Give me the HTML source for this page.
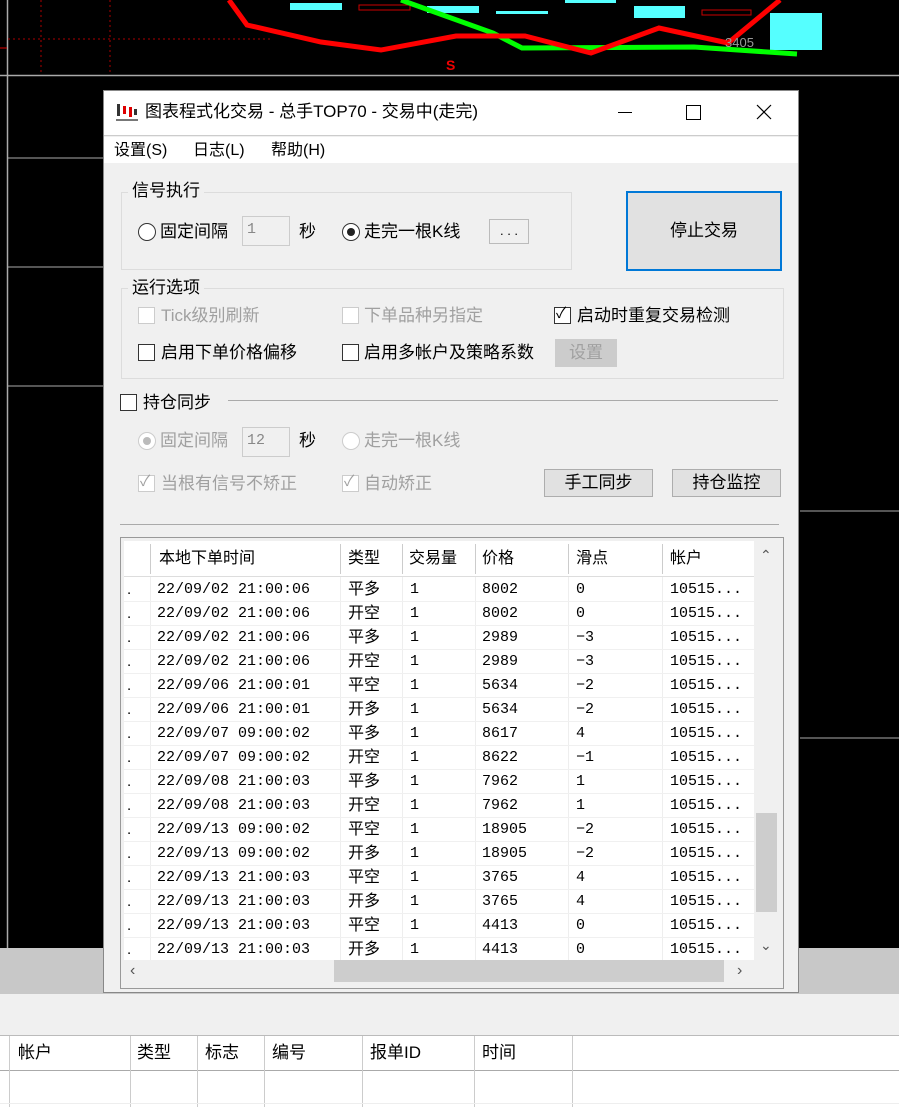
<!DOCTYPE html>
<html><head><meta charset="utf-8"><style>
*{margin:0;padding:0;box-sizing:border-box}
body{width:899px;height:1107px;position:relative;overflow:hidden;background:#fff;font-family:"Liberation Sans","Noto Sans CJK SC",sans-serif;font-size:17px;color:#000}
.a{position:absolute}
.t{position:absolute;white-space:nowrap;line-height:20px}
.g{color:#a0a0a0}
.cb{position:absolute;width:17px;height:17px;border:1px solid #333;background:#fff}
.cb.d{border-color:#ccc}
.rb{position:absolute;width:18px;height:18px;border:1px solid #333;border-radius:50%;background:#fff}
.inp{position:absolute;border:1px solid #ccc;background:#f0f0f0;color:#888;font-family:"Liberation Mono",monospace;font-size:15px;padding-left:4px;line-height:26px}
.btn{position:absolute;border:1px solid #adadad;background:#e1e1e1;text-align:center}
.row{position:absolute;left:0;width:630px;height:24px;border-bottom:1px solid #f0f0f0;font-size:15px;line-height:24px}
.row span{position:absolute;white-space:nowrap}
.m{font-family:"Liberation Mono","Noto Sans CJK SC",monospace;font-size:15px}
</style></head><body>
<!-- chart area -->
<div class="a" style="left:0;top:0;width:899px;height:948px;background:#000"></div>
<svg class="a" style="left:0;top:0" width="899" height="948">
<line x1="7.5" y1="0" x2="7.5" y2="948" stroke="#aaa" stroke-width="1.5"/>
<line x1="0" y1="75.5" x2="899" y2="75.5" stroke="#aaa" stroke-width="1.5"/>
<line x1="8" y1="39" x2="270" y2="39" stroke="#a00" stroke-dasharray="2,3"/>
<line x1="41" y1="0" x2="41" y2="72" stroke="#a00" stroke-dasharray="2,3"/>
<line x1="110" y1="0" x2="110" y2="72" stroke="#a00" stroke-dasharray="2,3"/>
<line x1="0" y1="48" x2="7" y2="48" stroke="#d00"/>
<line x1="800" y1="511" x2="899" y2="511" stroke="#aaa"/>
<line x1="800" y1="738" x2="899" y2="738" stroke="#aaa"/>
<line x1="8" y1="158" x2="103" y2="158" stroke="#aaa"/>
<line x1="8" y1="267" x2="103" y2="267" stroke="#aaa"/>
<line x1="8" y1="386" x2="103" y2="386" stroke="#aaa"/>
<rect x="290" y="3" width="52" height="7" fill="#5ff"/>
<rect x="427" y="6" width="52" height="7" fill="#5ff"/>
<rect x="496" y="11" width="52" height="3" fill="#5ff"/>
<rect x="565" y="0" width="51" height="3" fill="#5ff"/>
<rect x="634" y="6" width="51" height="12" fill="#5ff"/>
<rect x="770" y="13" width="52" height="37" fill="#5ff"/>
<rect x="359" y="5" width="51" height="5" fill="none" stroke="#c00"/>
<rect x="702" y="10" width="49" height="5" fill="none" stroke="#c00"/>
<polyline points="401,0 493,33 522,48 694,47 797,54" fill="none" stroke="#0f0" stroke-width="5"/>
<polyline points="229,0 247,25 321,42 381,50 456,36 525,36 591,53 659,28 728,43 780,0" fill="none" stroke="#f00" stroke-width="5"/>
<text x="725" y="47" fill="#999" font-size="13" font-family="Liberation Sans">3405</text>
<text x="446" y="70" fill="#e00" font-size="14" font-weight="bold" font-family="Liberation Sans">S</text>
</svg>
<!-- bottom panel -->
<div class="a" style="left:0;top:948px;width:899px;height:46px;background:#c8c8c8"></div>
<div class="a" style="left:0;top:994px;width:899px;height:42px;background:#f0f0f0;border-bottom:1px solid #bbb"></div>
<div class="a" style="left:0;top:1036px;width:899px;height:35px;background:#fff;border-bottom:1px solid #aaa"></div>
<div class="a" style="left:9px;top:1036px;width:1px;height:71px;background:#ccc"></div>
<div class="a" style="left:130px;top:1036px;width:1px;height:71px;background:#ccc"></div>
<div class="a" style="left:197px;top:1036px;width:1px;height:71px;background:#ccc"></div>
<div class="a" style="left:264px;top:1036px;width:1px;height:71px;background:#ccc"></div>
<div class="a" style="left:362px;top:1036px;width:1px;height:71px;background:#ccc"></div>
<div class="a" style="left:474px;top:1036px;width:1px;height:71px;background:#ccc"></div>
<div class="a" style="left:572px;top:1036px;width:1px;height:71px;background:#ccc"></div>
<div class="a" style="left:0;top:1103px;width:899px;height:1px;background:#eee"></div>
<div class="t" style="left:18px;top:1043px">帐户</div>
<div class="t" style="left:137px;top:1043px">类型</div>
<div class="t" style="left:205px;top:1043px">标志</div>
<div class="t" style="left:272px;top:1043px">编号</div>
<div class="t" style="left:370px;top:1043px">报单ID</div>
<div class="t" style="left:482px;top:1043px">时间</div>
<!-- dialog -->
<div class="a" style="left:103px;top:90px;width:696px;height:903px;background:#f0f0f0;border:1px solid #888"></div>
<div class="a" style="left:104px;top:91px;width:694px;height:45px;background:#fff;border-bottom:1px solid #ccc"></div>
<div class="a" style="left:104px;top:137px;width:694px;height:26px;background:#fff"></div>
<svg class="a" style="left:115px;top:101px" width="24" height="22"><rect x="2" y="3" width="3" height="12" fill="#333"/><rect x="8" y="5" width="3" height="8" fill="#d00"/><rect x="14" y="6" width="3" height="10" fill="#d00"/><rect x="19" y="8" width="3" height="6" fill="#333"/><rect x="1" y="18" width="22" height="2" fill="#777"/></svg>
<div class="t" style="left:145px;top:102px;font-size:17px">图表程式化交易 - 总手TOP70 - 交易中(走完)</div>
<div class="a" style="left:618px;top:112px;width:14px;height:1px;background:#000"></div>
<div class="a" style="left:686px;top:105px;width:15px;height:15px;border:1px solid #000"></div>
<svg class="a" style="left:756px;top:104px" width="16" height="16"><path d="M1 1L15 15M15 1L1 15" stroke="#000" stroke-width="1.2"/></svg>
<div class="t" style="left:114px;top:141px;font-size:16px">设置(S)</div>
<div class="t" style="left:193px;top:141px;font-size:16px">日志(L)</div>
<div class="t" style="left:271px;top:141px;font-size:16px">帮助(H)</div>
<!-- 信号执行 -->
<div class="a" style="left:121px;top:192px;width:451px;height:78px;border:1px solid #dcdcdc"></div>
<div class="t" style="left:128px;top:181px;background:#f0f0f0;padding:0 4px">信号执行</div>
<div class="rb" style="left:138px;top:223px"></div>
<div class="t" style="left:160px;top:222px">固定间隔</div>
<div class="inp" style="left:242px;top:216px;width:48px;height:30px">1</div>
<div class="t" style="left:299px;top:222px">秒</div>
<div class="rb" style="left:342px;top:223px"></div><div class="a" style="left:347px;top:228px;width:8px;height:8px;border-radius:50%;background:#222"></div>
<div class="t" style="left:364px;top:222px">走完一根K线</div>
<div class="btn" style="left:489px;top:219px;width:40px;height:25px;font-size:13px;line-height:22px;background:#f0f0f0;border-color:#bbb">. . .</div>
<div class="btn" style="left:626px;top:191px;width:156px;height:80px;border:2px solid #0078d7;line-height:76px;font-size:17px">停止交易</div>
<!-- 运行选项 -->
<div class="a" style="left:121px;top:288px;width:663px;height:91px;border:1px solid #dcdcdc"></div>
<div class="t" style="left:128px;top:278px;background:#f0f0f0;padding:0 4px">运行选项</div>
<div class="cb d" style="left:138px;top:307px"></div><div class="t g" style="left:161px;top:306px">Tick级别刷新</div>
<div class="cb d" style="left:342px;top:307px"></div><div class="t g" style="left:364px;top:306px">下单品种另指定</div>
<div class="cb" style="left:554px;top:307px"></div><div class="t" style="left:556px;top:304px;font-size:15px">✓</div><div class="t" style="left:577px;top:306px">启动时重复交易检测</div>
<div class="cb" style="left:138px;top:344px"></div><div class="t" style="left:161px;top:343px">启用下单价格偏移</div>
<div class="cb" style="left:342px;top:344px"></div><div class="t" style="left:364px;top:343px">启用多帐户及策略系数</div>
<div class="btn g" style="left:555px;top:339px;width:62px;height:28px;background:#ccc;border-color:#ccc;line-height:26px">设置</div>
<!-- 持仓同步 -->
<div class="cb" style="left:120px;top:394px"></div><div class="t" style="left:143px;top:393px">持仓同步</div>
<div class="a" style="left:228px;top:400px;width:550px;height:1px;background:#aaa"></div>
<div class="rb" style="left:138px;top:432px;border-color:#ccc"></div><div class="a" style="left:143px;top:437px;width:8px;height:8px;border-radius:50%;background:#bbb"></div>
<div class="t g" style="left:160px;top:431px">固定间隔</div>
<div class="inp" style="left:242px;top:427px;width:48px;height:30px">12</div>
<div class="t" style="left:299px;top:431px">秒</div>
<div class="rb" style="left:342px;top:432px;border-color:#ccc"></div><div class="t g" style="left:364px;top:431px">走完一根K线</div>
<div class="cb d" style="left:138px;top:475px"></div><div class="t g" style="left:140px;top:472px;font-size:15px">✓</div><div class="t g" style="left:161px;top:474px">当根有信号不矫正</div>
<div class="cb d" style="left:342px;top:475px"></div><div class="t g" style="left:344px;top:472px;font-size:15px">✓</div><div class="t g" style="left:364px;top:474px">自动矫正</div>
<div class="btn" style="left:544px;top:469px;width:109px;height:28px;line-height:26px">手工同步</div>
<div class="btn" style="left:672px;top:469px;width:109px;height:28px;line-height:26px">持仓监控</div>
<div class="a" style="left:120px;top:524px;width:659px;height:1px;background:#aaa"></div>
<!-- table -->
<div class="a" style="left:120px;top:537px;width:664px;height:452px;border:1px solid #999;background:#f0f0f0"></div>
<div class="a" style="left:124px;top:541px;width:630px;height:419px;background:#fff;overflow:hidden">
 <div class="a" style="left:0;top:0;width:630px;height:36px;border-bottom:1px solid #ddd;font-size:16px">
  <div class="a" style="left:26px;top:3px;width:1px;height:30px;background:#ccc"></div>
  <div class="a" style="left:216px;top:3px;width:1px;height:30px;background:#ccc"></div>
  <div class="a" style="left:278px;top:3px;width:1px;height:30px;background:#ccc"></div>
  <div class="a" style="left:351px;top:3px;width:1px;height:30px;background:#ccc"></div>
  <div class="a" style="left:444px;top:3px;width:1px;height:30px;background:#ccc"></div>
  <div class="a" style="left:538px;top:3px;width:1px;height:30px;background:#ccc"></div>
  <span class="t" style="left:35px;top:8px">本地下单时间</span><span class="t" style="left:224px;top:8px">类型</span><span class="t" style="left:285px;top:8px">交易量</span><span class="t" style="left:358px;top:8px">价格</span><span class="t" style="left:452px;top:8px">滑点</span><span class="t" style="left:546px;top:8px">帐户</span>
 </div>
 <div class="a" style="left:26px;top:36px;width:1px;height:400px;background:#eee"></div>
 <div class="a" style="left:216px;top:36px;width:1px;height:400px;background:#eee"></div>
 <div class="a" style="left:278px;top:36px;width:1px;height:400px;background:#eee"></div>
 <div class="a" style="left:351px;top:36px;width:1px;height:400px;background:#eee"></div>
 <div class="a" style="left:444px;top:36px;width:1px;height:400px;background:#eee"></div>
 <div class="a" style="left:538px;top:36px;width:1px;height:400px;background:#eee"></div>
 <div id="rows"></div>
</div>
<div class="a" style="left:754px;top:541px;width:25px;height:419px;background:#f0f0f0"></div>
<div class="t" style="left:760px;top:545px;font-size:14px;color:#555">&#8963;</div>
<div class="a" style="left:756px;top:813px;width:21px;height:99px;background:#cdcdcd"></div>
<div class="t" style="left:760px;top:935px;font-size:14px;color:#555">&#8964;</div>
<div class="a" style="left:124px;top:960px;width:630px;height:22px;background:#f0f0f0"></div>
<div class="a" style="left:334px;top:960px;width:390px;height:22px;background:#cdcdcd"></div>
<div class="t" style="left:130px;top:961px;font-size:16px;color:#555">‹</div>
<div class="t" style="left:737px;top:961px;font-size:16px;color:#555">›</div>
<script>
var d=[["22/09/02 21:00:06","平多","8002","0"],["22/09/02 21:00:06","开空","8002","0"],["22/09/02 21:00:06","平多","2989","−3"],["22/09/02 21:00:06","开空","2989","−3"],["22/09/06 21:00:01","平空","5634","−2"],["22/09/06 21:00:01","开多","5634","−2"],["22/09/07 09:00:02","平多","8617","4"],["22/09/07 09:00:02","开空","8622","−1"],["22/09/08 21:00:03","平多","7962","1"],["22/09/08 21:00:03","开空","7962","1"],["22/09/13 09:00:02","平空","18905","−2"],["22/09/13 09:00:02","开多","18905","−2"],["22/09/13 21:00:03","平空","3765","4"],["22/09/13 21:00:03","开多","3765","4"],["22/09/13 21:00:03","平空","4413","0"],["22/09/13 21:00:03","开多","4413","0"]];
var h="";d.forEach(function(r,i){h+='<div class="row" style="top:'+(37+24*i)+'px"><span style="left:3px">.</span><span class="m" style="left:33px">'+r[0]+'</span><span style="left:224px;font-size:16px">'+r[1]+'</span><span class="m" style="left:286px">1</span><span class="m" style="left:358px">'+r[2]+'</span><span class="m" style="left:452px">'+r[3]+'</span><span class="m" style="left:546px">10515...</span></div>';});
document.getElementById("rows").innerHTML=h;
</script>
</body></html>
